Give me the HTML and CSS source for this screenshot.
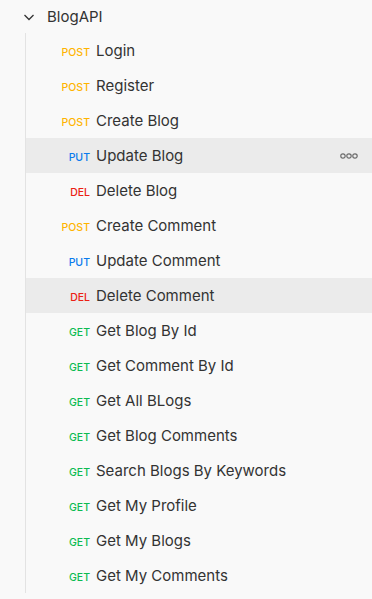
FILE: index.html
```html
<!DOCTYPE html>
<html lang="en">
<head>
<meta charset="UTF-8">
<title>BlogAPI</title>
<link rel="stylesheet" href="styles.css">
</head>
<body>
<div class="folder">
    <div class="folder-head">
        <svg class="chevron" width="12" height="12" viewBox="0 0 12 12"><path d="M1.5 4 L6 8.5 L10.5 4" fill="none" stroke="#333" stroke-width="1.3"/></svg>
        <span class="folder-name">BlogAPI</span>
    </div>
    <div class="requests">
        <div class="req"><span class="method post">POST</span><span class="name">Login</span></div>
        <div class="req"><span class="method post">POST</span><span class="name">Register</span></div>
        <div class="req"><span class="method post">POST</span><span class="name">Create Blog</span></div>
        <div class="req hover"><span class="method put">PUT</span><span class="name">Update Blog</span>
            <svg class="more" width="18" height="6" viewBox="0 0 18 6"><circle cx="3" cy="3" r="2.2" fill="none" stroke="#6b6b6b" stroke-width="1.2"/><circle cx="9" cy="3" r="2.2" fill="none" stroke="#6b6b6b" stroke-width="1.2"/><circle cx="15" cy="3" r="2.2" fill="none" stroke="#6b6b6b" stroke-width="1.2"/></svg>
        </div>
        <div class="req"><span class="method del">DEL</span><span class="name">Delete Blog</span></div>
        <div class="req"><span class="method post">POST</span><span class="name">Create Comment</span></div>
        <div class="req"><span class="method put">PUT</span><span class="name">Update Comment</span></div>
        <div class="req active"><span class="method del">DEL</span><span class="name">Delete Comment</span></div>
        <div class="req"><span class="method get">GET</span><span class="name">Get Blog By Id</span></div>
        <div class="req"><span class="method get">GET</span><span class="name">Get Comment By Id</span></div>
        <div class="req"><span class="method get">GET</span><span class="name">Get All BLogs</span></div>
        <div class="req"><span class="method get">GET</span><span class="name">Get Blog Comments</span></div>
        <div class="req"><span class="method get">GET</span><span class="name">Search Blogs By Keywords</span></div>
        <div class="req"><span class="method get">GET</span><span class="name">Get My Profile</span></div>
        <div class="req"><span class="method get">GET</span><span class="name">Get My Blogs</span></div>
        <div class="req"><span class="method get">GET</span><span class="name">Get My Comments</span></div>
    </div>
</div>
</body>
</html>
```

FILE: styles.css
```css
body {
    margin: 0;
    padding: 0;
    background-color: #f9f9f9;
    color: #212121;
    font-family: Inter, "Noto Sans", sans-serif;
}

.folder-head {
    height: 33px;
    display: flex;
    align-items: center;
    padding-left: 23px;
}
.chevron { margin-right: 12px; }
.folder-name { font-size: 15px; color: #333; }

.requests {
    margin-left: 25px;
    border-left: 1px solid #e3e3e3;
}
.req {
    height: 35px;
    line-height: 36px;
    display: flex;
    align-items: baseline;
    padding-left: 6px;
}
.req.hover, .req.active { background-color: #ebebeb; }

.method {
    width: 58px;
    margin-right: 6px;
    text-align: right;
    font-size: 10.5px;
    font-weight: 500;
}
.post { color: #ffb400; }
.put { color: #097bed; }
.del { color: #eb2013; }
.get { color: #0cbb52; }

.name { font-size: 15px; color: #333; flex: 1; }
.more { margin-right: 14px; align-self: center; }
```
